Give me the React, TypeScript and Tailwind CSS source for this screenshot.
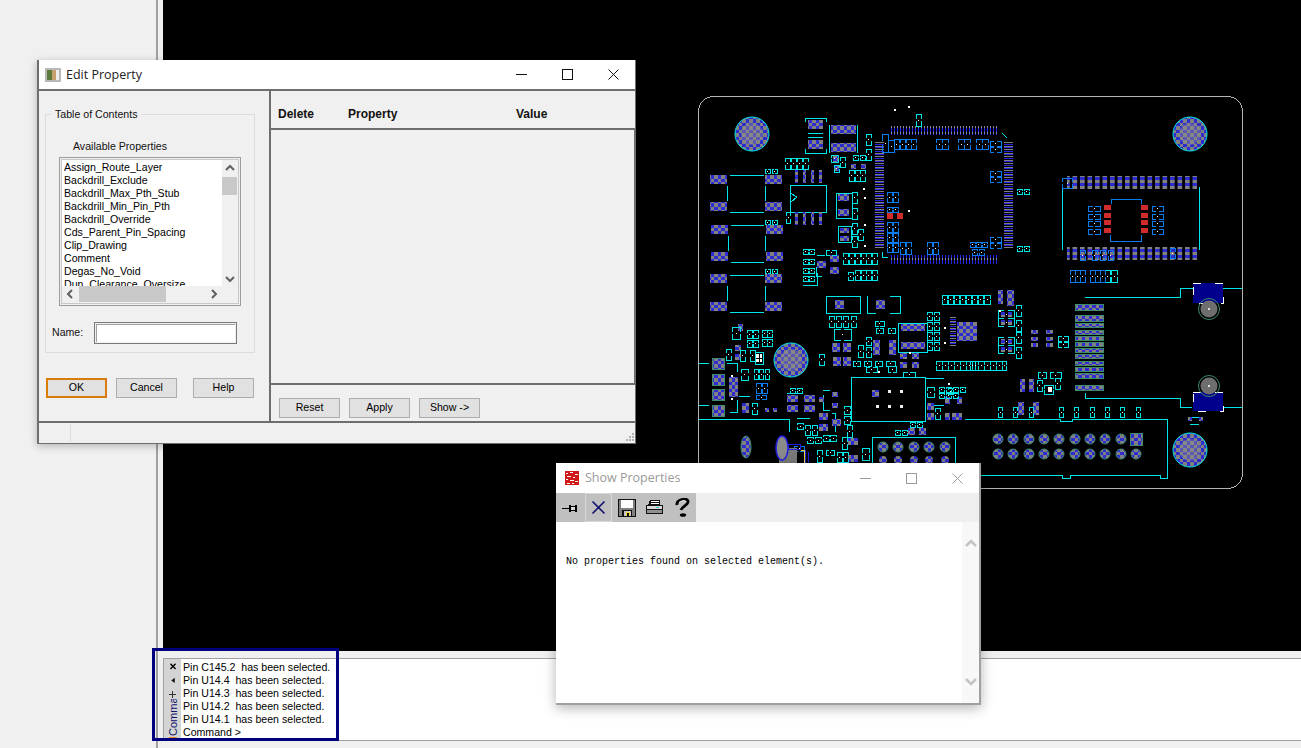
const CYAN = "#00e6e6";
const BLUE = "#0a7cf0";
const GREEN = "#3d8c6a";

type Box = [number, number, number, number];

const properties = [
  "Assign_Route_Layer",
  "Backdrill_Exclude",
  "Backdrill_Max_Pth_Stub",
  "Backdrill_Min_Pin_Pth",
  "Backdrill_Override",
  "Cds_Parent_Pin_Spacing",
  "Clip_Drawing",
  "Comment",
  "Degas_No_Void",
  "Dun_Clearance_Oversize",
];

const log = [
  "Pin C145.2  has been selected.",
  "Pin U14.4  has been selected.",
  "Pin U14.3  has been selected.",
  "Pin U14.2  has been selected.",
  "Pin U14.1  has been selected.",
  "Command >",
];

// pcb parts, all in page coordinates
const pads: Box[] = [
  [710, 175, 17, 9], [765, 175, 17, 9], [710, 202, 17, 9], [765, 202, 17, 9],
  [711, 225, 17, 9], [766, 225, 17, 9], [711, 252, 17, 9], [766, 252, 17, 9],
  [710, 274, 17, 9], [765, 274, 17, 9], [710, 302, 17, 9], [765, 302, 17, 9],
  [808, 120, 15, 9], [808, 140, 15, 9], [831, 125, 25, 9], [831, 143, 25, 9],
  [838, 194, 11, 7], [838, 209, 11, 7], [840, 228, 9, 5], [840, 236, 9, 5],
  [817, 261, 9, 7], [830, 255, 9, 7], [830, 267, 9, 7], [833, 156, 6, 6], [834, 166, 5, 5],
  [851, 164, 5, 5], [861, 164, 5, 5], [832, 343, 8, 9], [843, 343, 8, 9], [833, 357, 8, 9], [843, 357, 8, 9],
  [873, 340, 7, 15], [889, 340, 7, 15], [901, 324, 24, 7], [901, 342, 24, 7],
  [835, 300, 9, 9], [876, 300, 9, 9], [900, 353, 7, 6], [912, 353, 7, 6], [900, 362, 7, 6], [912, 362, 7, 6],
  [729, 377, 9, 20], [738, 324, 5, 7], [735, 345, 6, 6], [735, 354, 6, 6], [742, 403, 7, 10],
  [787, 395, 11, 7], [804, 395, 11, 7], [787, 405, 11, 7], [804, 405, 11, 7],
  [819, 397, 5, 5], [832, 392, 6, 5], [832, 403, 6, 5], [819, 413, 9, 7], [819, 424, 9, 7], [832, 419, 9, 7],
  [765, 408, 4, 4], [773, 408, 4, 4], [848, 438, 10, 7], [848, 455, 10, 7], [872, 390, 7, 7], [908, 428, 7, 7], [919, 428, 7, 7],
  [957, 322, 20, 19], [927, 403, 7, 7], [927, 413, 7, 7], [945, 397, 5, 7], [957, 397, 5, 7], [945, 413, 5, 7], [952, 413, 10, 7],
  [998, 290, 5, 14], [1007, 290, 7, 16], [1001, 312, 4, 5], [1008, 312, 4, 5], [1001, 320, 4, 5], [1008, 320, 4, 5],
  [1001, 339, 4, 5], [1008, 339, 4, 5], [1001, 347, 4, 5], [1008, 347, 4, 5],
  [1031, 330, 7, 4], [1046, 330, 7, 4], [1031, 337, 7, 4], [1046, 337, 7, 4], [1031, 343, 7, 4], [1046, 343, 7, 4],
  [1020, 379, 5, 13], [1029, 379, 5, 13], [1018, 402, 6, 13], [1033, 402, 6, 13], [1188, 417, 4, 4], [1199, 417, 4, 4],
];

// outlined in green on the board
const greenPads: Box[] = [
  [712, 358, 12, 11], [712, 374, 12, 11], [712, 389, 12, 11], [712, 405, 12, 11],
  [1075, 304, 28, 6], [1075, 315, 28, 6], [1075, 323, 28, 4], [1075, 330, 28, 4], [1075, 336, 28, 4], [1075, 342, 28, 4],
  [1075, 348, 28, 4], [1075, 354, 28, 4], [1075, 361, 28, 4], [1075, 367, 28, 4], [1075, 373, 28, 5], [1075, 385, 28, 5],
];

const cyanCaps: Box[] = [
  [866, 134, 5, 11], [866, 149, 5, 11], [916, 114, 5, 12], [831, 155, 7, 7], [834, 165, 5, 7], [840, 157, 5, 10],
  [853, 155, 5, 5], [860, 155, 5, 5], [849, 170, 5, 11], [855, 170, 5, 11], [860, 170, 5, 11],
  [785, 158, 5, 11], [791, 158, 5, 11], [797, 158, 5, 11], [803, 158, 5, 11], [765, 169, 5, 4], [772, 169, 5, 4],
  [765, 220, 5, 4], [772, 220, 5, 4], [765, 269, 5, 4], [772, 269, 5, 4], [786, 212, 4, 11],
  [852, 192, 5, 11], [852, 208, 5, 11], [852, 223, 5, 11], [858, 229, 5, 11], [852, 236, 5, 11],
  [803, 249, 5, 5], [809, 249, 5, 5], [803, 259, 5, 5], [809, 259, 5, 5], [803, 268, 5, 5], [809, 268, 5, 5], [803, 276, 5, 5], [809, 276, 5, 5],
  [843, 253, 5, 11], [849, 253, 5, 11], [855, 253, 5, 11], [861, 253, 5, 11], [866, 253, 5, 11], [872, 253, 5, 11],
  [855, 270, 5, 10], [861, 270, 5, 10], [866, 270, 5, 10], [872, 270, 5, 10], [848, 272, 5, 8], [826, 250, 10, 5],
  [829, 316, 5, 11], [836, 316, 5, 11], [843, 316, 5, 11], [851, 316, 5, 11], [834, 329, 17, 11],
  [858, 345, 5, 12], [866, 337, 5, 8], [866, 347, 5, 10], [875, 321, 9, 5], [876, 328, 7, 5], [888, 328, 7, 5],
  [853, 361, 7, 5], [864, 361, 7, 5], [875, 361, 7, 5], [886, 361, 9, 5], [866, 367, 11, 5], [888, 366, 8, 6], [903, 372, 12, 5],
  [927, 312, 5, 8], [934, 312, 5, 8], [927, 322, 5, 8], [934, 322, 5, 8], [927, 332, 5, 8], [934, 332, 5, 8], [927, 342, 5, 8], [934, 342, 5, 8],
  [942, 295, 5, 9], [948, 295, 5, 9], [954, 295, 5, 9], [960, 295, 5, 9], [966, 295, 5, 9], [972, 295, 5, 9], [978, 295, 5, 9], [984, 295, 6, 9],
  [936, 361, 6, 9], [942, 361, 6, 9], [948, 361, 6, 9], [954, 361, 6, 9], [960, 361, 6, 9], [966, 361, 6, 9], [972, 361, 6, 9], [978, 361, 6, 9], [984, 361, 6, 9], [990, 361, 6, 9], [996, 361, 6, 9], [1002, 361, 4, 9],
  [732, 327, 8, 12], [747, 330, 5, 8], [753, 330, 5, 8], [747, 340, 5, 7], [753, 340, 5, 7], [762, 330, 5, 7], [767, 330, 5, 7], [762, 339, 5, 7], [767, 339, 5, 7],
  [726, 349, 5, 11], [740, 350, 5, 11], [750, 350, 5, 11], [754, 369, 4, 10], [759, 369, 4, 10], [765, 369, 4, 10], [741, 369, 7, 11],
  [790, 388, 5, 5], [797, 388, 5, 5], [752, 403, 5, 11], [819, 354, 5, 11],
  [844, 406, 6, 8], [844, 416, 6, 8], [847, 425, 5, 12], [797, 423, 6, 6], [805, 425, 5, 10], [812, 425, 5, 10], [807, 437, 6, 6], [815, 437, 6, 6],
  [823, 435, 6, 6], [830, 435, 6, 6], [842, 437, 5, 12], [862, 448, 7, 12], [837, 452, 5, 10], [843, 452, 5, 10], [817, 450, 5, 12], [826, 450, 8, 5],
  [927, 387, 7, 10], [935, 408, 5, 11], [939, 387, 5, 5], [946, 387, 5, 5], [953, 387, 5, 5], [960, 387, 5, 5], [939, 393, 5, 5], [946, 393, 5, 5], [953, 393, 5, 5],
  [895, 430, 5, 5], [902, 430, 5, 5], [910, 422, 5, 5], [917, 422, 5, 5],
  [998, 310, 16, 8], [998, 318, 16, 8], [998, 337, 16, 8], [998, 345, 16, 8], [1016, 305, 5, 11], [1016, 320, 5, 11], [1016, 332, 5, 11], [1016, 347, 5, 11],
  [1058, 336, 10, 5], [1058, 342, 10, 5], [1038, 372, 8, 6], [1050, 372, 11, 6], [1055, 378, 5, 11], [1037, 380, 5, 11], [1044, 385, 9, 9],
  [998, 407, 4, 10], [1013, 407, 4, 10], [1029, 407, 4, 10], [1059, 407, 4, 10], [1074, 407, 4, 10], [1090, 407, 4, 10], [1105, 407, 4, 10], [1120, 407, 4, 10], [1136, 407, 4, 10],
  [1017, 189, 5, 5], [1024, 189, 5, 5], [1017, 246, 5, 5], [1024, 246, 5, 5], [1105, 270, 5, 12], [1111, 270, 6, 12],
  [970, 361, 5, 9], [948, 388, 4, 6],
];

const blueCaps: Box[] = [
  [882, 134, 6, 18], [888, 140, 6, 12], [894, 139, 5, 10], [900, 139, 5, 10], [906, 139, 5, 10], [911, 139, 5, 10],
  [936, 139, 6, 10], [942, 139, 6, 10], [958, 139, 6, 10], [964, 139, 6, 10], [976, 139, 6, 10], [982, 139, 6, 10],
  [990, 141, 11, 5], [990, 147, 11, 5], [887, 192, 5, 10], [893, 192, 5, 10], [887, 207, 5, 5], [893, 207, 5, 5],
  [887, 222, 5, 10], [893, 222, 5, 10], [887, 233, 5, 9], [893, 233, 5, 9], [887, 243, 5, 9], [893, 243, 5, 9],
  [900, 242, 5, 12], [906, 242, 5, 12], [927, 242, 5, 12], [933, 242, 5, 12], [990, 171, 11, 5], [990, 177, 11, 5],
  [990, 237, 11, 5], [990, 243, 11, 5], [970, 242, 5, 5], [976, 242, 5, 5], [982, 242, 5, 5], [972, 249, 5, 6], [979, 249, 5, 6],
  [1062, 178, 10, 10], [1088, 206, 12, 5], [1088, 214, 12, 5], [1088, 221, 12, 5], [1088, 229, 12, 5],
  [1152, 206, 11, 5], [1152, 214, 11, 5], [1152, 221, 11, 5], [1152, 229, 11, 5],
  [1070, 270, 5, 12], [1075, 270, 5, 12], [1080, 270, 5, 12], [1090, 270, 5, 12], [1095, 270, 5, 12], [1100, 270, 5, 12],
  [1080, 250, 5, 10], [1092, 250, 5, 10], [1100, 250, 5, 10], [1108, 250, 5, 10], [1170, 248, 5, 10],
  [756, 383, 5, 10], [762, 383, 5, 10], [756, 395, 10, 4], [794, 446, 10, 5],
];

const reds: Box[] = [
  [1104, 205, 7, 5], [1104, 213, 7, 5], [1104, 220, 7, 5], [1104, 228, 7, 5],
  [1141, 205, 7, 5], [1141, 213, 7, 5], [1141, 220, 7, 5], [1141, 228, 7, 5],
  [887, 213, 6, 6], [897, 213, 6, 6],
];

const traces = [
  "M730 175H764M730 212H764M727 186V201M765 186V201M731 225H764M731 262H764M728 236V251M765 236V251",
  "M730 275H764M730 312H764M727 286V301M765 286V301",
  "M805 122V118H826V122M805 149V153H826V149M808 133H823M808 137H823M829 125V153M857 125V153",
  "M790 185H826V212H790ZM790 193L797 197L790 203",
  "M836 193H852V218H836ZM838 226H851V242H838Z",
  "M898 323H927V352H898ZM826 296V313H860V296H826M867 296V313H876M890 296H900V313H890",
  "M851 377H925V421H851Z",
  "M699 419H789V432M872 463V437H955V463",
  "M1062 187V250M1199 187V250",
  "M1085 297H1180V288H1193M1223 288H1242M1085 393V398H1180V407H1192M1223 407H1242",
  "M965 419H1060V421H1072V419H1167V478H1160V475H1070V478H1062V475H965",
  "M1190 417H1199M1190 424H1199",
  "M699 363H709M699 405H709M727 363H737V372M730 412H737V400",
  "M750 396H739M787 393H802M797 418H810M823 390H830M823 395V410H830M832 413H835V432",
  "M803 285H817V273M817 255H825M816 267V276H822",
  "M929 405H944M925 378H944",
];

const holes: [number, number, number][] = [
  [752, 134, 17],
  [1190, 134, 17],
  [791, 360, 17],
  [1190, 450, 17],
];

const headerX = [998, 1013, 1029, 1044, 1059, 1075, 1090, 1105, 1121];
const boardDots: [number, number][] = [
  [894, 109], [908, 106], [863, 188], [864, 197], [864, 224], [864, 245],
  [908, 210], [909, 352], [944, 327], [944, 342], [948, 383], [878, 371], [999, 310],
  [731, 375], [731, 398],
];

function Cap({ box, color }: { box: Box; color: string }) {
  const [x, y, w, h] = box;
  const d =
    w > h
      ? `M${x + w * 0.4} ${y}H${x}V${y + h}H${x + w * 0.4}M${x + w * 0.6} ${y}H${x + w}V${y + h}H${x + w * 0.6}`
      : `M${x} ${y + h * 0.4}V${y}H${x + w}V${y + h * 0.4}M${x} ${y + h * 0.6}V${y + h}H${x + w}V${y + h * 0.6}`;
  return (
    <g>
      <path d={d} fill="none" stroke={color} />
      <rect x={x + Math.floor(w / 2)} y={y + Math.floor(h / 2)} width={1} height={1} fill="#fff" />
    </g>
  );
}

function Board() {
  return (
    <svg viewBox="163 0 1138 651" className="block h-full w-full" shapeRendering="crispEdges">
      <defs>
        <pattern id="checker" width="7" height="7" patternUnits="userSpaceOnUse">
          <rect width="7" height="7" fill="#2c2cd0" />
          <rect width="3.5" height="3.5" fill="#808080" />
          <rect x="3.5" y="3.5" width="3.5" height="3.5" fill="#808080" />
        </pattern>
        <pattern id="fineV" width="3" height="6" patternUnits="userSpaceOnUse">
          <rect width="1" height="6" fill="#2424e8" />
          <rect width="1" height="2" fill="#8a8aa8" />
        </pattern>
        <pattern id="fineH" width="6" height="7" patternUnits="userSpaceOnUse">
          <rect width="6" height="1" fill="#2424e8" />
          <rect y="2" width="6" height="1" fill="#808080" />
          <rect y="4" width="6" height="1" fill="#2424e8" />
          <rect y="6" width="6" height="1" fill="#808080" />
        </pattern>
        <pattern id="wide" width="7.5" height="6" patternUnits="userSpaceOnUse">
          <rect width="4.5" height="6" fill="#2c2cd0" />
          <rect width="4.5" height="3" fill="#808080" />
        </pattern>
      </defs>

      <rect x="698.5" y="96.5" width="544" height="392" rx="15" fill="none" stroke="#b4b4b4" />

      <path d={traces.join("")} fill="none" stroke={CYAN} />

      {/* ic pins */}
      {[795, 803, 811, 819].map((x) => (
        <g key={x}>
          <rect x={x} y={170} width={3} height={13} fill="url(#checker)" />
          <rect x={x} y={212} width={3} height={13} fill="url(#checker)" />
        </g>
      ))}
      <rect x="891" y="126" width="106" height="9" fill="url(#fineV)" />
      <rect x="891" y="255" width="106" height="9" fill="url(#fineV)" />
      <rect x="875" y="142" width="9" height="106" fill="url(#fineH)" />
      <rect x="1004" y="142" width="9" height="106" fill="url(#fineH)" />
      <rect x="1067" y="176" width="130" height="13" fill="url(#wide)" />
      <rect x="1067" y="247" width="130" height="13" fill="url(#wide)" />
      <path d="M1111 204V199H1141V204M1110 235V241H1141V235" fill="none" stroke={BLUE} />
      <rect x="950" y="316" width="6" height="30" fill="url(#fineH)" />
      <path d="M1002 133L1007 138M882 252V257H888" fill="none" stroke={CYAN} />

      {pads.map((p, i) => (
        <rect key={i} x={p[0]} y={p[1]} width={p[2]} height={p[3]} fill="url(#checker)" />
      ))}
      {greenPads.map((p, i) => (
        <rect key={i} x={p[0] + 0.5} y={p[1] + 0.5} width={p[2]} height={p[3]} fill="url(#checker)" stroke={GREEN} />
      ))}
      {cyanCaps.map((b, i) => (
        <Cap key={i} box={b} color={CYAN} />
      ))}
      {blueCaps.map((b, i) => (
        <Cap key={i} box={b} color={BLUE} />
      ))}
      {reds.map((p, i) => (
        <rect key={i} x={p[0]} y={p[1]} width={p[2]} height={p[3]} fill="#d02c2c" />
      ))}

      {holes.map(([cx, cy, r]) => (
        <g key={cx + cy} shapeRendering="auto">
          <circle cx={cx} cy={cy} r={r} fill="url(#checker)" stroke={CYAN} />
          <circle cx={cx} cy={cy} r={r - 6} fill="#909090" opacity="0.45" />
        </g>
      ))}

      {/* header pins */}
      {headerX.map((x) => (
        <g key={x} shapeRendering="auto">
          <circle cx={x} cy={439} r={5} fill="url(#checker)" stroke={GREEN} />
          <circle cx={x} cy={454} r={5} fill="url(#checker)" stroke={GREEN} />
        </g>
      ))}
      <rect x="1130" y="433" width="12" height="12" fill="url(#checker)" stroke={GREEN} />
      <circle cx="1136" cy="454" r="5" fill="url(#checker)" stroke={GREEN} shapeRendering="auto" />
      {[883, 898, 914, 929, 945].map((x) => (
        <g key={x} shapeRendering="auto">
          <circle cx={x} cy={447} r={5} fill="url(#checker)" stroke={GREEN} />
          <circle cx={x} cy={460} r={4} fill="url(#checker)" />
        </g>
      ))}

      {/* mounting ovals */}
      <g shapeRendering="auto">
        <ellipse cx="746" cy="447" rx="5" ry="11" fill="url(#checker)" stroke={GREEN} />
        <rect x="779" y="448" width="18" height="15" fill="#7a7a7a" />
        <ellipse cx="782" cy="448" rx="6" ry="12" fill="#8a8a8a" stroke="#2020e0" strokeWidth="1.5" />
      </g>
      <path d="M788 444H800V449H788ZM808 452V463M801 450H805V463" fill="none" stroke="#2020e0" />
      <path d="M801 450H804V463" fill="none" stroke="#e6d23c" />

      {/* rf connectors */}
      <rect x="1193" y="283" width="30" height="20" fill="#00008c" stroke="#fff" strokeDasharray="8 14" />
      <rect x="1193" y="392" width="30" height="19" fill="#00008c" stroke="#fff" strokeDasharray="8 14" />
      {[309, 386].map((cy) => (
        <g key={cy} shapeRendering="auto">
          <circle cx="1209" cy={cy} r="10.5" fill="none" stroke={GREEN} />
          <circle cx="1209" cy={cy} r="8.5" fill="#6e6e6e" />
          <rect x="1208" y={cy - 1} width="2" height="2" fill="#ddd" />
        </g>
      ))}

      {/* white pads */}
      {boardDots.map(([x, y]) => (
        <rect key={`${x}-${y}`} x={x} y={y} width={2} height={2} fill="#fff" />
      ))}
      {[[888, 390], [900, 390], [876, 405], [888, 405], [900, 405]].map(([x, y]) => (
        <rect key={`${x}-${y}`} x={x} y={y} width={3} height={3} fill="#eee" />
      ))}
      <rect x="755" y="352" width="8" height="12" fill="#000" stroke={CYAN} />
      <path d="M756 354h2.500v3.500h-2.500zM759.500 354h2.500v3.500h-2.500zM756 358.500h2.500v3.500h-2.500zM759.500 358.500h2.500v3.500h-2.500z" fill="#fff" />
      <rect x="1048" y="387" width="4" height="5" fill="#fff" />
    </svg>
  );
}

function WinControls({ color, gap }: { color: string; gap: string }) {
  return (
    <div className={`flex items-center ${gap}`}>
      <svg width="11" height="11" viewBox="0 0 11 11" shapeRendering="crispEdges">
        <path d="M0 5.500H11" stroke={color} />
      </svg>
      <svg width="11" height="11" viewBox="0 0 11 11" shapeRendering="crispEdges">
        <rect x="0.500" y="0.500" width="10" height="10" fill="none" stroke={color} />
      </svg>
      <svg width="11" height="11" viewBox="0 0 11 11">
        <path d="M0.500 0.500L10.500 10.500M10.500 0.500L0.500 10.500" stroke={color} />
      </svg>
    </div>
  );
}

function DlgButton({ label, primary }: { label: string; primary?: boolean }) {
  return (
    <button
      className={`flex h-[20px] w-[61px] shrink-0 items-center justify-center bg-[#e1e1e1] text-[10.6px] text-black ${
        primary ? "border-2 border-[#d87d0b]" : "border border-[#adadad]"
      }`}
    >
      {label}
    </button>
  );
}

function Chevron({ dir, color }: { dir: "up" | "down" | "left" | "right"; color: string }) {
  const d = {
    up: "M1 6L5 2L9 6",
    down: "M1 3L5 7L9 3",
    left: "M6 1L2 5L6 9",
    right: "M3 1L7 5L3 9",
  }[dir];
  return (
    <svg width="10" height="10" viewBox="0 0 10 10">
      <path d={d} fill="none" stroke={color} strokeWidth="2" />
    </svg>
  );
}

function EditProperty() {
  return (
    <div className="absolute left-[37px] top-[60px] flex h-[384px] w-[599px] flex-col border-b border-l-2 border-r border-[#6e6e6e] bg-[#f0f0f0] font-['Liberation_Sans',sans-serif] text-[10.6px] text-[#111] shadow-[0_2px_8px_rgba(0,0,0,0.25)]">
      <div className="flex h-[31px] items-center justify-between border-b-2 border-[#6e6e6e] bg-white pl-[6px] pr-[16px]">
        <div className="flex items-center gap-[5px] pt-[1px]">
          <svg width="16" height="14" viewBox="0 0 16 14" shapeRendering="crispEdges">
            <rect width="16" height="14" fill="#b8b8b8" />
            <rect x="2" y="2" width="5" height="10" fill="#5c7a3c" />
            <rect x="7" y="2" width="4" height="10" fill="#c8a070" />
            <rect x="11" y="2" width="3" height="10" fill="#eeeeee" />
          </svg>
          <span className="font-['Open_Sans',sans-serif] text-[12.5px] text-[#222]">Edit Property</span>
        </div>
        <WinControls color="#111" gap="gap-[35px]" />
      </div>

      <div className="flex min-h-0 flex-1">
        <div className="flex w-[232px] shrink-0 flex-col border-r-2 border-[#6e6e6e] pl-[6px]">
          <fieldset className="mt-[17px] h-[245px] w-[209px] border border-[#dcdcdc] px-[13px]">
            <legend className="-ml-[8px] px-[4px] leading-[13px]">Table of Contents</legend>
            <div className="mt-[19px] pl-[14px] leading-[13px]">Available Properties</div>
            <div className="mt-[4px] h-[149px] w-[182px] border border-[#a09c98] p-[1px]">
              <div className="relative h-full border border-[#c8c8c8] bg-[#f0f0f0]">
                <div className="flex h-[126px]">
                  <div className="w-[160px] overflow-hidden bg-white pl-[2px] pt-[1px] leading-[13px] text-black">
                    {properties.map((p) => (
                      <div key={p} className="whitespace-nowrap">
                        {p}
                      </div>
                    ))}
                  </div>
                  <div className="flex w-[16px] flex-col items-center justify-between pb-[2px] pt-[4px]">
                    <Chevron dir="up" color="#606060" />
                    <Chevron dir="down" color="#606060" />
                  </div>
                  <div className="absolute left-[160px] top-[17px] h-[18px] w-[15px] bg-[#c8c8c8]" />
                </div>
                <div className="flex h-[16px] items-center">
                  <div className="flex w-[17px] justify-center">
                    <Chevron dir="left" color="#606060" />
                  </div>
                  <div className="h-full w-[87px] bg-[#c8c8c8]" />
                  <div className="flex w-[56px] justify-end pr-[3px]">
                    <Chevron dir="right" color="#606060" />
                  </div>
                </div>
              </div>
            </div>
            <div className="mt-[16px] flex items-center">
              <span className="-ml-[7px] w-[42px]">Name:</span>
              <div className="h-[22px] w-[143px] border border-[#7a7a7a] p-[1px]">
                <div className="h-full border-l border-t border-[#a0a0a0] bg-white" />
              </div>
            </div>
          </fieldset>
          <div className="mt-[25px] flex pl-[1px]">
            <DlgButton label="OK" primary />
            <div className="ml-[9px]">
              <DlgButton label="Cancel" />
            </div>
            <div className="ml-[16px]">
              <DlgButton label="Help" />
            </div>
          </div>
        </div>

        <div className="flex flex-1 flex-col">
          <div className="flex h-[39px] items-end border-b-2 border-[#6e6e6e] pb-[7px] pl-[7px] text-[12px] font-bold leading-[14px]">
            <span className="w-[70px]">Delete</span>
            <span className="w-[168px]">Property</span>
            <span>Value</span>
          </div>
          <div className="h-[255px] border-b-2 border-r border-[#6e6e6e]" />
          <div className="flex gap-[9px] pl-[8px] pt-[13px]">
            <DlgButton label="Reset" />
            <DlgButton label="Apply" />
            <DlgButton label="Show ->" />
          </div>
        </div>
      </div>

      <div className="flex h-[22px] shrink-0 items-stretch border-t-2 border-[#6e6e6e]">
        <div className="my-[1px] w-[32px] border-r border-[#dcdcdc]" />
        <div className="flex flex-1 items-end justify-end pb-[1px] pr-[1px]">
          <svg width="10" height="10" viewBox="0 0 10 10" shapeRendering="crispEdges">
            <path d="M8 1h2v2h-2zM5 4h2v2h-2zM8 4h2v2h-2zM2 7h2v2h-2zM5 7h2v2h-2zM8 7h2v2h-2z" fill="#b0b0b0" />
          </svg>
        </div>
      </div>
    </div>
  );
}

function ShowProperties() {
  return (
    <div className="absolute left-[556px] top-[463px] flex h-[242px] w-[425px] flex-col border-b-2 border-r-2 border-[#a0a0a0] bg-white shadow-[0_3px_12px_rgba(0,0,0,0.3)]">
      <div className="flex h-[30px] items-center justify-between pl-[9px] pr-[16px]">
        <div className="flex items-center gap-[6px]">
          <svg width="14" height="14" viewBox="0 0 14 14" shapeRendering="crispEdges">
            <rect width="14" height="14" fill="#d01818" />
            <path d="M1 2h2v1H1zM5 1h3v1H5zM10 3h3v1h-3zM2 5h4v1H2zM8 6h2v1H8zM1 8h2v1H1zM5 9h4v1H5zM10 10h3v1h-3zM2 12h3v1H2zM7 12h2v1H7z" fill="#fff" />
          </svg>
          <span className="font-['Open_Sans',sans-serif] text-[12.5px] text-[#9a9a9a]">Show Properties</span>
        </div>
        <WinControls color="#9a9a9a" gap="gap-[35px]" />
      </div>

      <div className="flex h-[29px] bg-[#efefef]">
        <div className="flex w-[140px] items-stretch gap-[1px] bg-[#c0c0c0]">
          <div className="flex w-[28px] items-center justify-center">
            <svg width="16" height="12" viewBox="0 0 16 12" shapeRendering="crispEdges">
              <path d="M0 6H7" stroke="#000" />
              <path d="M7 3h2V4h4V3h2v7h-2V9H9v1H7z" fill="#000" />
              <path d="M9 5h4v3H9z" fill="#d8d8d8" />
            </svg>
          </div>
          <div className="flex w-[27px] items-center justify-center border border-[#d8d8d8]">
            <svg width="15" height="15" viewBox="0 0 15 15">
              <path d="M1.500 1.500L13.500 13.500M13.500 1.500L1.500 13.500" stroke="#101070" strokeWidth="1.600" />
            </svg>
          </div>
          <div className="flex w-[28px] items-center justify-center">
            <svg width="18" height="18" viewBox="0 0 18 18" shapeRendering="crispEdges">
              <path d="M0 0h18v18H0z" fill="#111" />
              <path d="M1 1h16v16H1z" fill="#808080" />
              <path d="M3 1h12v8H3z" fill="#fff" />
              <path d="M4 11h10v7H4z" fill="#111" />
              <path d="M6 12h7v5H6z" fill="#c8c8c8" />
              <path d="M8 13h4v4H8z" fill="#f0d83c" />
              <path d="M9 14h2v3H9z" fill="#111" />
            </svg>
          </div>
          <div className="flex w-[26px] items-center justify-center">
            <svg width="17" height="15" viewBox="0 0 17 15" shapeRendering="crispEdges">
              <path d="M4 0h10v5h3v9H0V5h2z" fill="#111" />
              <path d="M5 1h8v1H5zM5 3h8v1H5z" fill="#fff" />
              <path d="M1 6h15v3H1z" fill="#d8d8d8" />
              <path d="M1 10h15v3H1z" fill="#909090" />
              <path d="M10 7h3v1h-3z" fill="#30c8c8" />
            </svg>
          </div>
          <div className="flex w-[28px] items-center justify-center">
            <svg width="16" height="20" viewBox="0 0 16 20">
              <path d="M3 7C2 2 13 -1 14 3C15 7 8 8 7 12" fill="none" stroke="#000" strokeWidth="2.800" />
              <path d="M5 4.500C7 2.500 11 2 11.500 3.500" fill="none" stroke="#fff" strokeWidth="1" />
              <ellipse cx="9" cy="17" rx="3.200" ry="1.800" fill="#000" />
            </svg>
          </div>
        </div>
      </div>

      <div className="flex min-h-0 flex-1">
        <div className="flex-1 pl-[10px] pt-[33px] font-['Liberation_Mono',monospace] text-[10px] leading-[13px] text-black">
          No properties found on selected element(s).
        </div>
        <div className="flex w-[17px] flex-col items-center justify-between bg-[#f8f8f8] py-[16px]">
          <svg width="12" height="10" viewBox="0 0 12 10">
            <path d="M1 8L6 3L11 8" fill="none" stroke="#c4c4c4" strokeWidth="2.500" />
          </svg>
          <svg width="12" height="10" viewBox="0 0 12 10">
            <path d="M1 2L6 7L11 2" fill="none" stroke="#c4c4c4" strokeWidth="2.500" />
          </svg>
        </div>
      </div>
    </div>
  );
}

function CommandPanel() {
  return (
    <div className="flex h-[97px] flex-col bg-[#f0f0f0] pt-[7px]">
      <div className="flex h-[83px] border-b border-l border-t border-[#a0a0a0] bg-white">
        <div className="flex w-[17px] flex-col items-center overflow-hidden bg-[#d4d4d4] pt-[3px]">
          <svg width="8" height="8" viewBox="0 0 8 8" className="mt-[1px]">
            <path d="M1 1L7 7M7 1L1 7" stroke="#000" strokeWidth="1.600" />
          </svg>
          <svg width="6" height="8" viewBox="0 0 6 8" className="mt-[7px]">
            <path d="M5 1V7L1 4Z" fill="#111" />
          </svg>
          <svg width="9" height="9" viewBox="0 0 9 9" className="mt-[7px]" shapeRendering="crispEdges">
            <path d="M4 0h1v3h3v2H5v4H4V5H1V3h3z" fill="#333" />
          </svg>
          <span className="mt-[1px] h-[43px] rotate-180 overflow-hidden font-['Liberation_Sans',sans-serif] text-[11px] leading-[14px] text-[#10106a] [writing-mode:vertical-rl]">
            Command
          </span>
          <div className="mt-[1px] h-[3px] w-[8px] bg-[#e08020]" />
        </div>
        <div className="pl-[2px] pt-[2px] font-['Liberation_Sans',sans-serif] text-[10.6px] leading-[13px] text-black">
          {log.map((line) => (
            <div key={line} className="whitespace-pre">
              {line}
            </div>
          ))}
        </div>
      </div>
    </div>
  );
}

export default function App() {
  return (
    <div className="relative flex h-[748px] w-[1301px] overflow-hidden bg-[#f0f0f0]">
      <div className="w-[163px] shrink-0">
        <div className="h-full w-[158px] border-r-2 border-[#a0a0a0]" />
      </div>
      <div className="flex min-w-0 flex-1 flex-col">
        <div className="h-[651px] bg-black">
          <Board />
        </div>
        <CommandPanel />
      </div>

      <EditProperty />
      <ShowProperties />

      {/* blue selection mark drawn on the screenshot */}
      <div className="absolute left-[152px] top-[648px] h-[93px] w-[187px] border-[3px] border-[#000080]" />
    </div>
  );
}
